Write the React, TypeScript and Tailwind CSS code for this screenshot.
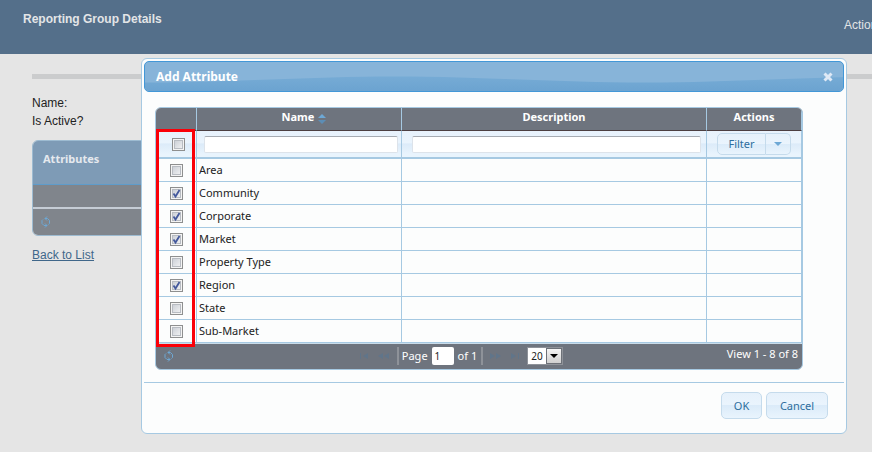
import React, { useState } from 'react';

const initialRows = [
  { name: 'Area', on: false },
  { name: 'Community', on: true },
  { name: 'Corporate', on: true },
  { name: 'Market', on: true },
  { name: 'Property Type', on: false },
  { name: 'Region', on: true },
  { name: 'State', on: false },
  { name: 'Sub-Market', on: false },
];

const glass =
  'border border-[#c5dbec] bg-[linear-gradient(#e6f1fb_0%,#eaf4fd_48%,#dbebf9_50%,#e9f4fd_100%)] text-[#2e6e9e]';

function Check({ label, checked, onChange }: { label: string; checked: boolean; onChange: () => void }) {
  return (
    <span className="grid size-[13px]">
      <input
        type="checkbox"
        aria-label={label}
        checked={checked}
        onChange={onChange}
        className="col-start-1 row-start-1 size-[13px] appearance-none border border-[#8e8f8f] bg-[linear-gradient(135deg,#c3c8d0,#f8f8f8)] shadow-[inset_0_0_0_1px_#f4f4f4,inset_0_0_0_2px_#b8bcc2]"
      />
      {checked && (
        <svg viewBox="0 0 13 13" className="pointer-events-none col-start-1 row-start-1 size-[13px]" aria-hidden="true">
          <path d="M3.5 6.5L5.5 9.5L9.5 3" fill="none" stroke="#44599c" strokeWidth="1.8" />
        </svg>
      )}
    </span>
  );
}

function RefreshIcon() {
  return (
    <svg viewBox="0 0 12 12" className="size-3 shrink-0" fill="none" stroke="#6da8d5" aria-hidden="true">
      <path d="M5 2.5H7.5L9.5 4.5V7.5L8.5 8.5" />
      <path d="M7 9.5H4L2 7.5V4.5L3 3.5" />
      <path d="M7 0.5L5 2.5L7 4.5M5 7.5L7 9.5L5 11.5" />
    </svg>
  );
}

function PageIcon({ kind }: { kind: 'first' | 'prev' | 'next' | 'last' }) {
  const flip = kind === 'next' || kind === 'last';
  return (
    <svg viewBox="0 0 11 6" className={flip ? 'h-1.5 w-[11px] rotate-180' : 'h-1.5 w-[11px]'} fill="#60758a" aria-hidden="true">
      {kind === 'first' || kind === 'last' ? (
        <path d="M1 0H2V6H1ZM4 3L9 0V6Z" />
      ) : (
        <path d="M0 3L5 0V6ZM6 3L11 0V6Z" />
      )}
    </svg>
  );
}

function PageButton({ kind, label }: { kind: 'first' | 'prev' | 'next' | 'last'; label: string }) {
  return (
    <button type="button" aria-label={label} disabled className="flex h-4 items-center">
      <PageIcon kind={kind} />
    </button>
  );
}

function Gloss() {
  return (
    <svg className="col-start-1 row-start-1 h-full w-full" aria-hidden="true">
      <defs>
        <linearGradient id="low" x1="0" y1="0" x2="0" y2="1">
          <stop offset="0" stopColor="#76abd5" />
          <stop offset="1" stopColor="#6ba3d0" />
        </linearGradient>
        <pattern id="wave" width="500" height="30" patternUnits="userSpaceOnUse">
          <path d="M0 20.5C90 20.5 160 14.5 250 14.5S410 20.5 500 20.5V30H0Z" fill="url(#low)" />
        </pattern>
      </defs>
      <rect width="100%" height="100%" fill="url(#wave)" />
    </svg>
  );
}

const headCell = 'h-[23px] border-r border-b border-r-[#a6c9e2] border-b-[#4c3f42] bg-[#6e747e] pb-1 text-center font-bold text-white';
const filterCell =
  'h-[28px] border-r border-b-2 border-[#a6c9e2] bg-[linear-gradient(#e8f2fc_0%,#eaf4fd_45%,#dcebf9_50%,#e9f4fd_90%)]';
const bodyCell = 'h-[23px] border-r border-b border-[#a6c9e2] px-0.5';

export default function App() {
  const [rows, setRows] = useState(initialRows);
  const [page, setPage] = useState('1');
  const toggle = (i: number) => setRows(rows.map((r, j) => (j === i ? { ...r, on: !r.on } : r)));
  const all = rows.every((r) => r.on);

  return (
    <div className="relative min-h-screen overflow-hidden bg-[#e5e5e5] font-['Liberation_Sans',Arial,sans-serif] text-xs text-[#222]">
      <header className="flex h-[54px] justify-between overflow-hidden bg-[#546f8a] pl-[23px] text-[#e3e5e7]">
        <h1 className="pt-2.5 font-bold leading-[18px]">Reporting Group Details</h1>
        <a href="#actions" className="w-7 pt-4 leading-[18px]">
          Actions
        </a>
      </header>

      <main className="pl-8 pt-5">
        <hr className="h-[5px] border-0 bg-[#cbcccd]" />
        <div className="pt-[15px] leading-[18px]">
          <p>Name:</p>
          <p>Is Active?</p>
        </div>
        <section className="mt-2.5 mr-8 overflow-hidden rounded-md border border-[#9dbbd1] font-['Noto_Sans',sans-serif]">
          <h2 className="h-[44px] border-b border-[#5e9ccb] bg-[#7e9bb6] px-2.5 pt-2.5 text-[11px] leading-4 font-bold text-[#e5e9ee]">
            Attributes
          </h2>
          <div className="h-[22px] bg-[#80858c]" />
          <div className="flex h-7 items-center border-t-2 border-[#c5ccd5] bg-[#80858c] pl-[7px]">
            <button type="button" aria-label="Refresh attributes">
              <RefreshIcon />
            </button>
          </div>
        </section>
        <a href="#list" className="mt-2.5 inline-block leading-[18px] text-[#40678a] underline">
          Back to List
        </a>
      </main>

      <div
        role="dialog"
        aria-labelledby="dialog-title"
        className="absolute top-[58px] right-[25px] left-[141px] rounded-md border border-[#a6c9e2] bg-[#fcfdfd] p-0.5 font-['Noto_Sans',sans-serif] text-[11px] leading-4"
      >
        <div className="grid h-[31px] overflow-hidden rounded-[5px] border border-[#4297d7] bg-[#87b4d9]">
          <Gloss />
          <div className="col-start-1 row-start-1 flex items-center justify-between pr-2.5 pl-[11px] text-white">
            <h2 id="dialog-title" className="text-xs font-bold">
              Add Attribute
            </h2>
            <button type="button" aria-label="Close">
              <svg viewBox="0 0 10 10" className="size-2.5" aria-hidden="true">
                <path d="M1.5 1.5L8.5 8.5M8.5 1.5L1.5 8.5" stroke="#dfe9f6" strokeWidth="3" />
              </svg>
            </button>
          </div>
        </div>

        <div className="relative mt-[15px] mr-[41px] mb-3 ml-[11px]">
          <div className="overflow-hidden rounded-md border border-[#a6c9e2] bg-[#6e747e]">
            <table className="w-full table-fixed border-separate border-spacing-0 bg-[#fcfdfd]">
              <colgroup>
                <col className="w-[41px]" />
                <col className="w-[205px]" />
                <col />
                <col className="w-[95px]" />
              </colgroup>
              <thead>
                <tr>
                  <td className={headCell} />
                  <th className={headCell}>
                    <button type="button" className="ml-2.5 inline-flex items-center gap-1">
                      Name
                      <svg viewBox="0 0 8 10" className="mt-1 h-2.5 w-2" aria-hidden="true">
                        <path d="M0 4L4 0L8 4Z" fill="#6da8d5" />
                        <path d="M0 6H8L4 10Z" fill="#5c8db5" />
                      </svg>
                    </button>
                  </th>
                  <th className={headCell}>Description</th>
                  <th className={headCell}>Actions</th>
                </tr>
                <tr>
                  <td className={filterCell}>
                    <div className="flex justify-center pl-1">
                      <Check label="Select all" checked={all} onChange={() => setRows(rows.map((r) => ({ ...r, on: !all })))} />
                    </div>
                  </td>
                  <td className={filterCell}>
                    <input
                      aria-label="Filter by name"
                      className="mx-[7px] block h-[17px] w-[calc(100%-10px)] rounded-xs border border-[#dde3ea] border-t-[#a6abb3] bg-white px-1"
                    />
                  </td>
                  <td className={filterCell}>
                    <input
                      aria-label="Filter by description"
                      className="ml-2.5 block h-[17px] w-[calc(100%-15px)] rounded-xs border border-[#dde3ea] border-t-[#a6abb3] bg-white px-1"
                    />
                  </td>
                  <td className={filterCell}>
                    <div className="ml-2.5 flex h-[22px]">
                      <button type="button" className={`${glass} w-[49px] rounded-l-[5px]`}>
                        Filter
                      </button>
                      <button type="button" aria-label="Filter options" className={`${glass} flex w-[25px] items-center justify-center rounded-r-[5px] border-l-0`}>
                        <svg viewBox="0 0 8 4" className="h-1 w-2" aria-hidden="true">
                          <path d="M0 0H8L4 4Z" fill="#6da8d5" />
                        </svg>
                      </button>
                    </div>
                  </td>
                </tr>
              </thead>
              <tbody>
                {rows.map((r, i) => (
                  <tr key={r.name}>
                    <td className={bodyCell}>
                      <div className="flex justify-center">
                        <Check label={`Select ${r.name}`} checked={r.on} onChange={() => toggle(i)} />
                      </div>
                    </td>
                    <td className={bodyCell}>{r.name}</td>
                    <td className={bodyCell} />
                    <td className={bodyCell} />
                  </tr>
                ))}
              </tbody>
            </table>
            <div className="grid h-[26px] grid-cols-[1fr_auto_1fr] items-center border-t border-[#c9dcea] px-1 pb-0.5 text-white">
              <button type="button" aria-label="Refresh" className="ml-[3px] w-3">
                <RefreshIcon />
              </button>
              <div className="flex items-center pr-9">
                <div className="flex gap-2 pr-2">
                  <PageButton kind="first" label="First page" />
                  <PageButton kind="prev" label="Previous page" />
                </div>
                <label className="flex h-[18px] items-center gap-1 border-l-2 border-[#8e9299] pl-[3px]">
                  Page
                  <input
                    value={page}
                    onChange={(e) => setPage(e.target.value)}
                    className="h-[18px] w-[22px] rounded-xs bg-white px-[3px] text-[10px] text-[#222]"
                  />
                </label>
                <span className="flex h-[18px] items-center border-r-2 border-[#8e9299] px-1">of 1</span>
                <div className="flex gap-2 px-[7px]">
                  <PageButton kind="next" label="Next page" />
                  <PageButton kind="last" label="Last page" />
                </div>
                <div className="grid h-[18px] w-9 border border-[#8e9299] bg-white">
                  <select
                    aria-label="Rows per page"
                    className="col-start-1 row-start-1 h-4 w-full appearance-none bg-transparent pl-[3px] text-[10px] leading-4 text-[#222]"
                  >
                    <option>20</option>
                    <option>50</option>
                  </select>
                  <span className="pointer-events-none col-start-1 row-start-1 flex h-4 w-4 items-center justify-center justify-self-end border border-[#6d7178] bg-[linear-gradient(#f4f4f4,#cfcfcf)]">
                    <svg viewBox="0 0 8 4" className="h-1 w-2" aria-hidden="true">
                      <path d="M0 0H8L4 4Z" fill="#000" />
                    </svg>
                  </span>
                </div>
              </div>
              <span className="pb-1 text-right">View 1 - 8 of 8</span>
            </div>
          </div>
          <div className="pointer-events-none absolute top-[22px] bottom-[23px] left-px w-[39px] border-3 border-[#fa0008]" />
        </div>

        <div className="flex justify-end gap-1 border-t border-[#a6c9e2] pt-[9px] pr-4 pb-3">
          <button type="button" className={`${glass} h-[27px] w-[41px] rounded-[5px]`}>
            OK
          </button>
          <button type="button" className={`${glass} h-[27px] w-[62px] rounded-[5px]`}>
            Cancel
          </button>
        </div>
      </div>
    </div>
  );
}
